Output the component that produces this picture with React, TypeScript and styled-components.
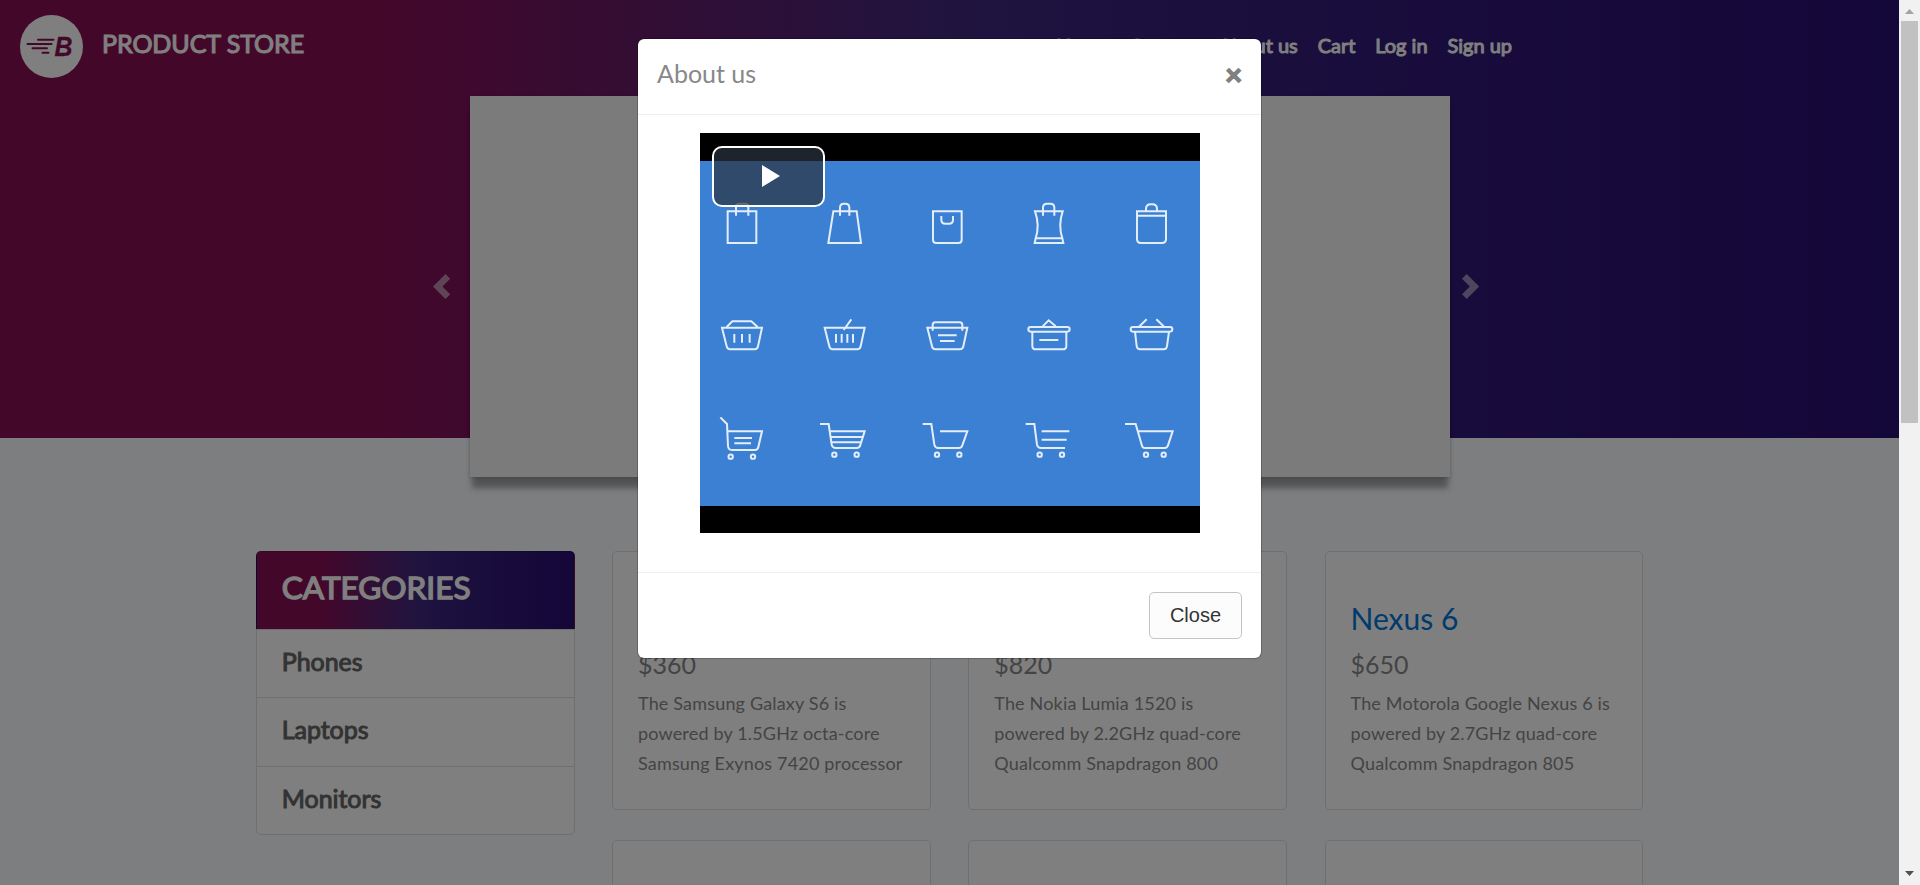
import React from "react";
import styled, { createGlobalStyle } from "styled-components";

const GlobalStyle = createGlobalStyle`
  *, *::before, *::after { box-sizing: border-box; }
  body { margin: 0; overflow: hidden; background: #fafcff; }
  h1, h2, h3, h4, h5, p, ul { margin: 0; padding: 0; font-weight: 400; }
`;

const brandGradient =
  "linear-gradient(90deg, #870f55 0%, #870f55 20%, #41297f 50%, #37207d 60%, #290e72 100%)";

const Window = styled.div`
  position: relative;
  display: grid;
  grid-template-columns: 1fr 21px;
  width: 1920px;
  height: 885px;
  overflow: hidden;
  font-family: Lato, "Liberation Sans", sans-serif;
  font-size: 20px;
  line-height: 1.5;
  color: #888;
`;

const Page = styled.div`
  height: 885px;
  overflow: hidden;
  background: #fafcff;
`;

const Hero = styled.header`
  height: 438px;
  background: ${brandGradient};
`;

const NavBar = styled.nav`
  display: flex;
  align-items: flex-start;
  justify-content: space-between;
  height: 96px;
  padding: 15px 377px 0 20px;
`;

const Brand = styled.a`
  display: flex;
  gap: 19px;
  color: #fff;
`;

const BrandName = styled.span`
  padding-top: 9px;
  font-size: 25px;
  line-height: 38px;
  letter-spacing: -0.05px;
  -webkit-text-stroke: 1.1px #fff;
`;

const NavLinks = styled.ul`
  display: flex;
  padding-top: 15px;
  list-style: none;
`;

const NavLink = styled.li`
  padding: 0 10px;
  color: #fff;
  line-height: 30px;
  letter-spacing: -0.02px;
  -webkit-text-stroke: 1px #fff;
`;

const Carousel = styled.div`
  display: flex;
  align-items: flex-start;
  padding-left: 433px;
`;

const Chevron = styled.svg<{ $side: "left" | "right" }>`
  flex: none;
  width: 25px;
  height: 25px;
  margin-top: 178px;
  margin-left: ${(p) => (p.$side === "right" ? "12px" : "0")};
  margin-right: ${(p) => (p.$side === "left" ? "12px" : "0")};
  fill: #fff;
  opacity: 0.5;
`;

const Slide = styled.div`
  flex: none;
  width: 980px;
  height: 381px;
  background: #f7f7f7;
  box-shadow: 0 13px 6px -2px rgba(0, 0, 0, 0.34), 0 1px 4px rgba(0, 0, 0, 0.16);
`;

const Content = styled.main`
  display: grid;
  grid-template-columns: 318.75px 1fr;
  column-gap: 37.5px;
  width: 1387.5px;
  margin: 113px auto 0;
`;

const Categories = styled.aside`
  height: 284px;
`;

const CategoryHeading = styled.h1`
  height: 78px;
  padding: 9px 25px 0;
  border: 1px solid rgba(0, 0, 0, 0.125);
  border-bottom: 0;
  border-radius: 5px 5px 0 0;
  background: ${brandGradient};
  color: #fff;
  font-size: 31.5px;
  line-height: 52px;
  letter-spacing: 0.03px;
  -webkit-text-stroke: 1.4px #fff;
`;

const CategoryItem = styled.div<{ $first?: boolean; $last?: boolean }>`
  height: ${(p) => (p.$first ? "68px" : "69px")};
  padding: 11px 25px 0;
  border: 1px solid #dfdfdf;
  border-bottom-width: ${(p) => (p.$last ? "1px" : "0")};
  border-radius: ${(p) => (p.$last ? "0 0 5px 5px" : "0")};
  background: #fff;
  color: #666;
  font-size: 25px;
  line-height: 40px;
  letter-spacing: -0.05px;
  -webkit-text-stroke: 1px #666;
`;

const ProductGrid = styled.section`
  display: grid;
  grid-template-columns: repeat(3, 318.75px);
  gap: 30px 37.5px;
  grid-auto-rows: 259px;
`;

const ProductCard = styled.article`
  padding: 50px 25px 0;
  border: 1px solid #dfdfdf;
  border-radius: 5px;
  background: #fff;
`;

const ProductName = styled.h4`
  height: 33px;
  margin-bottom: 16px;
  color: #0275d8;
  font-size: 30px;
  line-height: 33px;
`;

const ProductPrice = styled.h5`
  margin-bottom: 9px;
  font-size: 25px;
  line-height: 27.5px;
`;

const ProductText = styled.p`
  font-size: 18px;
  line-height: 30px;
  letter-spacing: 0.17px;
  white-space: pre-line;
`;

const Scrollbar = styled.div`
  display: flex;
  flex-direction: column;
  align-items: center;
  background: #f1f1f1;
`;

const ScrollArrow = styled.svg`
  flex: none;
  width: 21px;
  height: 21px;
`;

const ScrollTrack = styled.div`
  flex: 1;
  width: 17px;
`;

const ScrollThumb = styled.div`
  height: 402px;
  background: #c1c1c1;
`;

const Backdrop = styled.div`
  position: absolute;
  inset: 0 21px 0 0;
  display: flex;
  align-items: flex-start;
  justify-content: center;
  padding-top: 38px;
  background: rgba(0, 0, 0, 0.5);
`;

const Dialog = styled.div`
  width: 625px;
  border: 1px solid rgba(0, 0, 0, 0.2);
  border-radius: 7px;
  background: #fff;
  background-clip: padding-box;
`;

const DialogHeader = styled.div`
  display: flex;
  justify-content: space-between;
  height: 76px;
  padding: 16px 19px 0;
  border-bottom: 1px solid #eceeef;
`;

const DialogTitle = styled.h5`
  font-size: 25px;
  line-height: 37px;
`;

const Dismiss = styled.span`
  color: #808080;
  font-size: 29px;
  font-weight: 700;
  line-height: 37px;
  -webkit-text-stroke: 1.6px #808080;
`;

const DialogBody = styled.div`
  display: flex;
  justify-content: center;
  height: 457px;
  padding-top: 18px;
`;

const Video = styled.div`
  position: relative;
  width: 500px;
  height: 400px;
  padding: 28px 0 27px;
  background: #000;
`;

const Poster = styled.svg`
  display: block;
  width: 500px;
  height: 345px;
  background: #3c80d3;
  fill: none;
  stroke: #e4eefb;
  stroke-width: 6;
`;

const PlayButton = styled.div`
  position: absolute;
  top: 13px;
  left: 12px;
  display: flex;
  align-items: center;
  justify-content: center;
  width: 113px;
  height: 61px;
  border: 2px solid #fff;
  border-radius: 10px;
  background: rgba(43, 51, 63, 0.7);
`;

const PlayGlyph = styled.svg`
  width: 18px;
  height: 22px;
  margin: 0 0 2px 5px;
  fill: #fff;
`;

const DialogFooter = styled.div`
  display: flex;
  justify-content: flex-end;
  height: 86px;
  padding: 19px 19px 0;
  border-top: 1px solid #eceeef;
`;

const CloseButton = styled.button`
  width: 93px;
  height: 47px;
  padding: 0;
  border: 1px solid #c4c4c4;
  border-radius: 5px;
  background: #fcfcfc;
  color: #333;
  font: 20px "Liberation Sans", Arial, sans-serif;
`;

const categories = ["Phones", "Laptops", "Monitors"];

const products = [
  {
    name: "",
    price: "$360",
    text: "The Samsung Galaxy S6 is\npowered by 1.5GHz octa-core\nSamsung Exynos 7420 processor",
  },
  {
    name: "",
    price: "$820",
    text: "The Nokia Lumia 1520 is\npowered by 2.2GHz quad-core\nQualcomm Snapdragon 800",
  },
  {
    name: "Nexus 6",
    price: "$650",
    text: "The Motorola Google Nexus 6 is\npowered by 2.7GHz quad-core\nQualcomm Snapdragon 805",
  },
];

const links = ["Home", "Contact", "About us", "Cart", "Log in", "Sign up"];

const posterPaths = [
  // bags
  "M83 151H169V246H83ZM108 164V137q0-9 9-9h19q9 0 9 9V164",
  "M400 151H470L483 246H385ZM420 164V140q0-12 12-12h4q12 0 12 12V164",
  "M699 151H785V236q0 10-10 10H709q-10 0-10-10ZM724 165V176q0 12 12 12h11q12 0 12-12V165",
  "M1005 151H1088Q1074 192 1087 232L1090 246H1004L1007 232Q1020 192 1005 151ZM1009 232H1085M1029 164V140q0-12 12-12h10q12 0 12 12V164",
  "M1311 151H1398V234q0 12-12 12H1323q-12 0-12-12ZM1311 164H1398M1338 151V144q0-14 14-14h5q14 0 14 14V151",
  // baskets
  "M66 500H186L174 556q-2 9-10 9H90q-8 0-10-9ZM80 498L97 481H154L173 498M103 519V545M126 519V545M149 519V545",
  "M374 500H494L482 556q-2 9-10 9H398q-8 0-10-9ZM454 475L431 507M408 519V545M425 519V545M442 519V545M459 519V545",
  "M682 500H802L790 556q-2 9-10 9H706q-8 0-10-9ZM698 509V492q0-8 8-8h73q8 0 8 8V509M714 523H770M720 540H764",
  "M992 498H1102q7 0 7 7t-7 7H992q-7 0-7-7t7-7ZM997 512V554q0 11 11 11h80q11 0 11-11V512M1028 496L1046 478L1067 496M1018 537H1075",
  "M1299 498H1410q7 0 7 7t-7 7H1299q-7 0-7-7t7-7ZM1305 512L1310 555q1 10 11 10h70q9 0 10-10L1407 512M1317 497L1340 475M1391 496L1369 475",
  // carts
  "M61 769L81 789L84 855q1 12 12 12H165q8 0 10-9L186 811H82M103 831H156M103 847H153",
  "M360 789H386L395 851q2 10 12 10H470q9 0 11-9L494 811H389M391 828H490M394 844H485",
  "M668 789H694L703 851q2 10 12 10H777q8 0 10-8L802 811H720",
  "M977 789H1003L1011 851q2 10 12 10H1095M1025 811H1108M1025 836H1100",
  "M1275 789H1307L1326 854q2 7 9 7H1394q8 0 10-8L1418 811H1314",
];

const wheels: [number, number][] = [
  [92, 887], [159, 887], [403, 881], [470, 881], [711, 881],
  [778, 881], [1019, 881], [1086, 881], [1338, 881], [1391, 881],
];

const Logo = () => (
  <svg width="63" height="63" viewBox="0 0 63 63">
    <circle cx="31.5" cy="31.5" r="31.5" fill="#fff" />
    <path
      d="M18 24.8H33.5M7.5 29H31.5M12.5 33.3H27M22.5 37.8H28.5"
      stroke="#870f55"
      strokeWidth="2"
      strokeLinecap="round"
    />
    <text
      x="34.5"
      y="41"
      fill="#870f55"
      stroke="#870f55"
      strokeWidth="0.3"
      fontFamily="'Liberation Sans', Arial, sans-serif"
      fontSize="27"
      fontWeight="700"
      fontStyle="italic"
      textLength="18"
      lengthAdjust="spacingAndGlyphs"
    >
      B
    </text>
  </svg>
);

export default function App() {
  return (
    <Window>
      <GlobalStyle />
      <Page>
        <Hero>
          <NavBar>
            <Brand>
              <Logo />
              <BrandName>PRODUCT STORE</BrandName>
            </Brand>
            <NavLinks>
              {links.map((label) => (
                <NavLink key={label}>{label}</NavLink>
              ))}
            </NavLinks>
          </NavBar>
          <Carousel>
            <Chevron $side="left" viewBox="0 0 8 8">
              <path d="M4 0l-4 4 4 4 1.5-1.5-2.5-2.5 2.5-2.5-1.5-1.5z" />
            </Chevron>
            <Slide />
            <Chevron $side="right" viewBox="0 0 8 8">
              <path d="M1.5 0l-1.5 1.5 2.5 2.5-2.5 2.5 1.5 1.5 4-4-4-4z" />
            </Chevron>
          </Carousel>
        </Hero>
        <Content>
          <Categories>
            <CategoryHeading>CATEGORIES</CategoryHeading>
            {categories.map((label, i) => (
              <CategoryItem
                key={label}
                $first={i === 0}
                $last={i === categories.length - 1}
              >
                {label}
              </CategoryItem>
            ))}
          </Categories>
          <ProductGrid>
            {products.map((p) => (
              <ProductCard key={p.price}>
                <ProductName>{p.name}</ProductName>
                <ProductPrice>{p.price}</ProductPrice>
                <ProductText>{p.text}</ProductText>
              </ProductCard>
            ))}
            <ProductCard />
            <ProductCard />
            <ProductCard />
          </ProductGrid>
        </Content>
      </Page>
      <Scrollbar>
        <ScrollArrow viewBox="0 0 21 21">
          <path d="M6 14L10.5 9L15 14Z" fill="#a3a3a3" />
        </ScrollArrow>
        <ScrollTrack>
          <ScrollThumb />
        </ScrollTrack>
        <ScrollArrow viewBox="0 0 21 21">
          <path d="M6 7L10.5 12L15 7Z" fill="#505050" />
        </ScrollArrow>
      </Scrollbar>
      <Backdrop>
        <Dialog>
          <DialogHeader>
            <DialogTitle>About us</DialogTitle>
            <Dismiss>×</Dismiss>
          </DialogHeader>
          <DialogBody>
            <Video>
              <Poster viewBox="0 0 1500 1035">
                {posterPaths.map((d) => (
                  <path key={d} d={d} />
                ))}
                {wheels.map(([cx, cy]) => (
                  <circle key={`${cx}-${cy}`} cx={cx} cy={cy} r="6.5" />
                ))}
              </Poster>
              <PlayButton>
                <PlayGlyph viewBox="0 0 18 22">
                  <path d="M0 0L18 11L0 22Z" />
                </PlayGlyph>
              </PlayButton>
            </Video>
          </DialogBody>
          <DialogFooter>
            <CloseButton>Close</CloseButton>
          </DialogFooter>
        </Dialog>
      </Backdrop>
    </Window>
  );
}
